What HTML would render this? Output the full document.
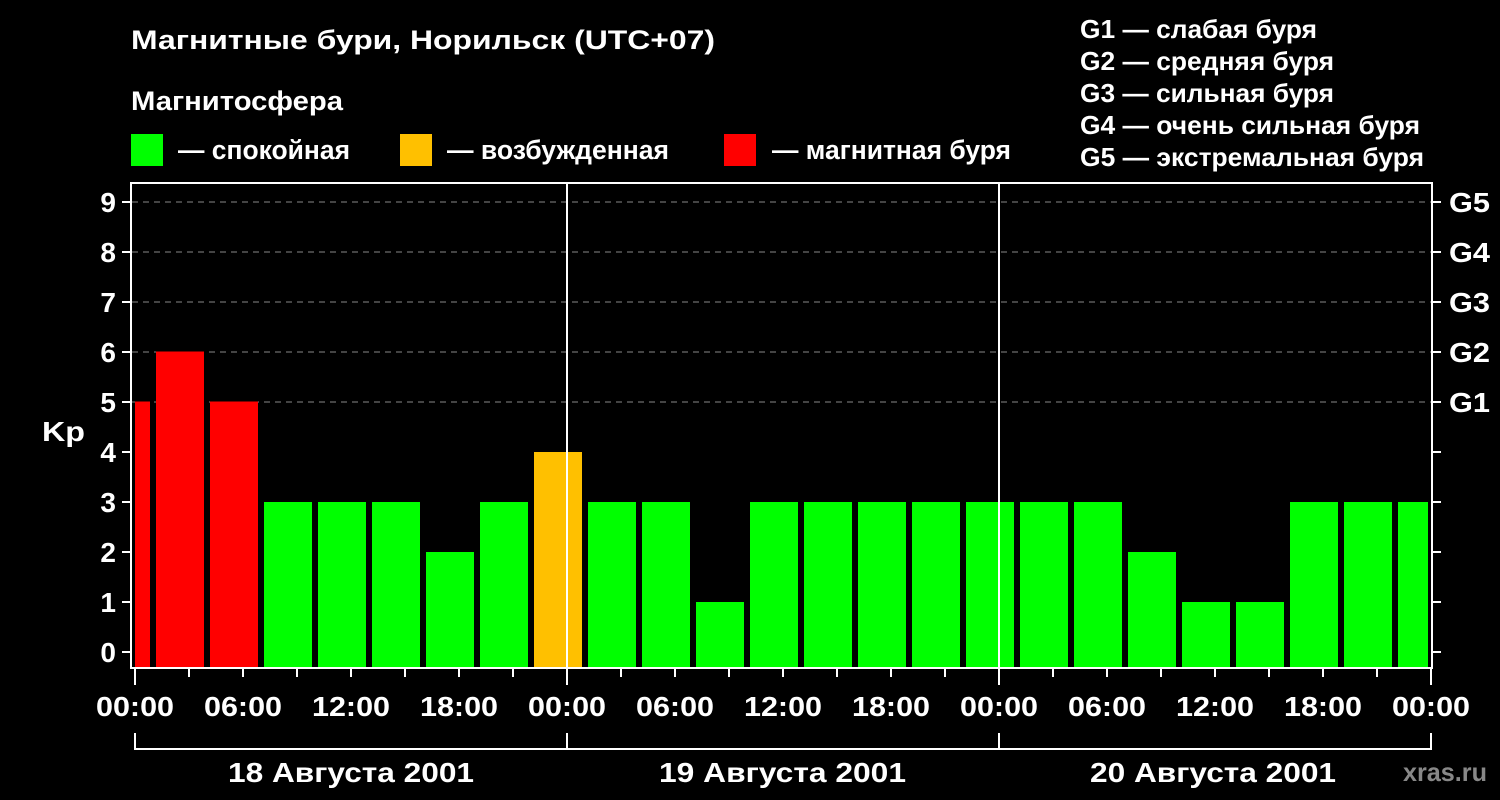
<html><body style="margin:0;background:#000;width:1500px;height:800px;overflow:hidden">
<svg width="1500" height="800" xmlns="http://www.w3.org/2000/svg" font-family="Liberation Sans, DejaVu Sans, sans-serif" font-weight="bold" fill="#fff">
<rect width="1500" height="800" fill="#000"/>
<g lengthAdjust="spacingAndGlyphs">
<text x="131" y="49" font-size="27" textLength="584" lengthAdjust="spacingAndGlyphs">Магнитные бури, Норильск (UTC+07)</text>
<text x="131" y="110" font-size="27" textLength="212" lengthAdjust="spacingAndGlyphs">Магнитосфера</text>
<rect x="131" y="134" width="32" height="32" fill="#00ff00"/>
<text x="178" y="159" font-size="27" textLength="172" lengthAdjust="spacingAndGlyphs">— спокойная</text>
<rect x="400" y="134" width="32" height="32" fill="#ffc000"/>
<text x="447" y="159" font-size="27" textLength="222" lengthAdjust="spacingAndGlyphs">— возбужденная</text>
<rect x="724" y="134" width="32" height="32" fill="#ff0000"/>
<text x="772" y="159" font-size="27" textLength="239" lengthAdjust="spacingAndGlyphs">— магнитная буря</text>
<g font-size="26">
<text x="1080" y="38" textLength="237" lengthAdjust="spacingAndGlyphs">G1 — слабая буря</text>
<text x="1080" y="70" textLength="254" lengthAdjust="spacingAndGlyphs">G2 — средняя буря</text>
<text x="1080" y="102" textLength="254" lengthAdjust="spacingAndGlyphs">G3 — сильная буря</text>
<text x="1080" y="134" textLength="340" lengthAdjust="spacingAndGlyphs">G4 — очень сильная буря</text>
<text x="1080" y="166" textLength="344" lengthAdjust="spacingAndGlyphs">G5 — экстремальная буря</text>
</g>
</g>
<g stroke="#888" stroke-width="1" stroke-dasharray="6,5">
<line x1="132" y1="202" x2="1431" y2="202"/><line x1="132" y1="252" x2="1431" y2="252"/>
<line x1="132" y1="302" x2="1431" y2="302"/><line x1="132" y1="352" x2="1431" y2="352"/>
<line x1="132" y1="402" x2="1431" y2="402"/>
</g>
<g>
<rect x="135" y="401.5" width="15" height="266.5" fill="#f00"/>
<rect x="156" y="351.5" width="48" height="316.5" fill="#f00"/>
<rect x="210" y="401.5" width="48" height="266.5" fill="#f00"/>
<rect x="264" y="502" width="48" height="166" fill="#0f0"/>
<rect x="318" y="502" width="48" height="166" fill="#0f0"/>
<rect x="372" y="502" width="48" height="166" fill="#0f0"/>
<rect x="426" y="552" width="48" height="116" fill="#0f0"/>
<rect x="480" y="502" width="48" height="166" fill="#0f0"/>
<rect x="534" y="452" width="48" height="216" fill="#ffc000"/>
<rect x="588" y="502" width="48" height="166" fill="#0f0"/>
<rect x="642" y="502" width="48" height="166" fill="#0f0"/>
<rect x="696" y="602" width="48" height="66" fill="#0f0"/>
<rect x="750" y="502" width="48" height="166" fill="#0f0"/>
<rect x="804" y="502" width="48" height="166" fill="#0f0"/>
<rect x="858" y="502" width="48" height="166" fill="#0f0"/>
<rect x="912" y="502" width="48" height="166" fill="#0f0"/>
<rect x="966" y="502" width="48" height="166" fill="#0f0"/>
<rect x="1020" y="502" width="48" height="166" fill="#0f0"/>
<rect x="1074" y="502" width="48" height="166" fill="#0f0"/>
<rect x="1128" y="552" width="48" height="116" fill="#0f0"/>
<rect x="1182" y="602" width="48" height="66" fill="#0f0"/>
<rect x="1236" y="602" width="48" height="66" fill="#0f0"/>
<rect x="1290" y="502" width="48" height="166" fill="#0f0"/>
<rect x="1344" y="502" width="48" height="166" fill="#0f0"/>
<rect x="1398" y="502" width="30" height="166" fill="#0f0"/>
</g>
<g stroke="#fff" stroke-width="2" fill="none">
<line x1="567" y1="182" x2="567" y2="668"/><line x1="999" y1="182" x2="999" y2="668"/>
<rect x="131" y="183" width="1301" height="485"/>
<path d="M122 202h9M122 252h9M122 302h9M122 352h9M122 402h9M122 452h9M122 502h9M122 552h9M122 602h9M122 652h9"/>
<path d="M1432 202h9M1432 252h9M1432 302h9M1432 352h9M1432 402h9M1432 452h9M1432 502h9M1432 552h9M1432 602h9M1432 652h9"/>
<path d="M135 668v17M567 668v17M999 668v17M1431 668v17"/>
<path d="M189 668v9M243 668v9M297 668v9M351 668v9M405 668v9M459 668v9M513 668v9M621 668v9M675 668v9M729 668v9M783 668v9M837 668v9M891 668v9M945 668v9M1053 668v9M1107 668v9M1161 668v9M1215 668v9M1269 668v9M1323 668v9M1377 668v9"/>
<path d="M135 733v16h1296v-16M567 733v16M999 733v16"/>
</g>
<g font-size="28" text-anchor="end">
<text x="116" y="212">9</text><text x="116" y="262">8</text><text x="116" y="312">7</text><text x="116" y="362">6</text><text x="116" y="412">5</text><text x="116" y="462">4</text><text x="116" y="512">3</text><text x="116" y="562">2</text><text x="116" y="612">1</text><text x="116" y="662">0</text>
</g>
<text x="42" y="441" font-size="28" textLength="43" lengthAdjust="spacingAndGlyphs">Kp</text>
<g font-size="28"><text x="1449" y="212" textLength="41" lengthAdjust="spacingAndGlyphs">G5</text><text x="1449" y="262" textLength="41" lengthAdjust="spacingAndGlyphs">G4</text><text x="1449" y="312" textLength="41" lengthAdjust="spacingAndGlyphs">G3</text><text x="1449" y="362" textLength="41" lengthAdjust="spacingAndGlyphs">G2</text><text x="1449" y="412" textLength="41" lengthAdjust="spacingAndGlyphs">G1</text></g>
<g font-size="28">
<text x="96" y="716" textLength="78" lengthAdjust="spacingAndGlyphs">00:00</text><text x="204" y="716" textLength="78" lengthAdjust="spacingAndGlyphs">06:00</text><text x="312" y="716" textLength="78" lengthAdjust="spacingAndGlyphs">12:00</text><text x="420" y="716" textLength="78" lengthAdjust="spacingAndGlyphs">18:00</text>
<text x="528" y="716" textLength="78" lengthAdjust="spacingAndGlyphs">00:00</text><text x="636" y="716" textLength="78" lengthAdjust="spacingAndGlyphs">06:00</text><text x="744" y="716" textLength="78" lengthAdjust="spacingAndGlyphs">12:00</text><text x="852" y="716" textLength="78" lengthAdjust="spacingAndGlyphs">18:00</text>
<text x="960" y="716" textLength="78" lengthAdjust="spacingAndGlyphs">00:00</text><text x="1068" y="716" textLength="78" lengthAdjust="spacingAndGlyphs">06:00</text><text x="1176" y="716" textLength="78" lengthAdjust="spacingAndGlyphs">12:00</text><text x="1284" y="716" textLength="78" lengthAdjust="spacingAndGlyphs">18:00</text>
<text x="1392" y="716" textLength="78" lengthAdjust="spacingAndGlyphs">00:00</text>
<text x="228" y="782" textLength="246" lengthAdjust="spacingAndGlyphs">18 Августа 2001</text><text x="659" y="782" textLength="247" lengthAdjust="spacingAndGlyphs">19 Августа 2001</text><text x="1090" y="782" textLength="246" lengthAdjust="spacingAndGlyphs">20 Августа 2001</text>
</g>
<text x="1403" y="781" font-size="26" fill="#888" textLength="84" lengthAdjust="spacingAndGlyphs">xras.ru</text>
</svg>
</body></html>
